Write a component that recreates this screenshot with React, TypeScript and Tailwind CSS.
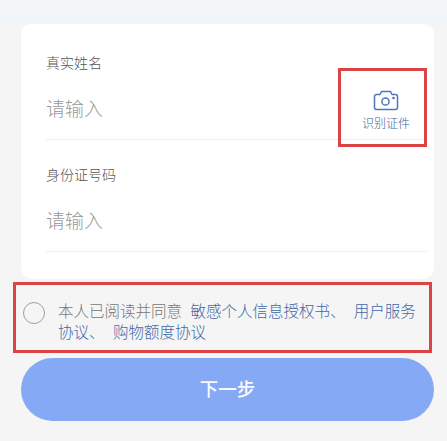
const font = { fontFamily: '"Noto Sans CJK SC", "Liberation Sans", sans-serif' };

function Field({ label, children }: { label: string; children?: React.ReactNode }) {
  return (
    <div className="h-[112px] flex flex-col">
      <div className="h-[28px] mt-[12px] text-[14px] leading-[28px] font-light text-[#555]">{label}</div>
      <div className="mt-[5px] h-[59px] pb-[3px] flex items-center border-b border-[#eeeeee] mr-[7px] relative">
        <span className="text-[19px] font-light text-[#999]">请输入</span>
        {children}
      </div>
    </div>
  );
}

export default function App() {
  return (
    <div className="w-[447px] h-[441px] overflow-hidden relative bg-[#f5f5f6]" style={font}>
      <div className="h-[24px] bg-gradient-to-b from-[#f6f6f7] to-[#eff3fa]" />
      <div className="ml-[21px] w-[413px] h-[255px] bg-white rounded-t-[10px] rounded-b-[12px] pl-[25px] pt-[12px]">
        <Field label="真实姓名">
          <div className="absolute right-[11px] top-[9px] w-[60px] flex flex-col items-center">
            <svg width="26" height="21" viewBox="0 0 26 21" fill="none" stroke="#4f74c0" strokeWidth="1.5" strokeLinejoin="round">
              <path d="M3.5 4.5h3.5l1.5-3h9l1.5 3h3.5a2 2 0 0 1 2 2v11a2 2 0 0 1-2 2h-19a2 2 0 0 1-2-2v-11a2 2 0 0 1 2-2z" />
              <circle cx="12.5" cy="11.5" r="3.6" />
              <circle cx="20.5" cy="8" r="0.6" fill="#4f74c0" />
            </svg>
            <span className="mt-[4px] text-[12px] leading-[16px] font-light text-[#3f5f8f] whitespace-nowrap">识别证件</span>
          </div>
        </Field>
        <Field label="身份证号码" />
      </div>

      <div className="mt-[3px] ml-[15px] w-[415px] h-[67px] flex items-start pl-[8px] pt-[18px]">
        <div className="w-[22px] h-[22px] mt-[2px] rounded-full border border-[#a0a0a0] shrink-0" />
        <p className="ml-[13px] w-[362px] text-[15.5px] leading-[21px] font-light text-[#777] [word-spacing:5px]">
          本人已阅读并同意 <span className="text-[#3f68a8]">敏感个人信息授权书、 用户服务协议、 购物额度协议</span>
        </p>
      </div>

      <div className="mt-[9px] ml-[21px] w-[413px] h-[63px] pb-[2px] rounded-full bg-[#86a9f6] flex items-center justify-center text-[18.5px] font-medium text-[#f8faff]">
        下一步
      </div>

      <div className="absolute left-[338px] top-[68px] w-[89px] h-[79px] border-[3px] border-[#dc4343]" />
      <div className="absolute left-[13px] top-[282px] w-[419px] h-[71px] border-[3px] border-[#dc4343]" />
    </div>
  );
}
